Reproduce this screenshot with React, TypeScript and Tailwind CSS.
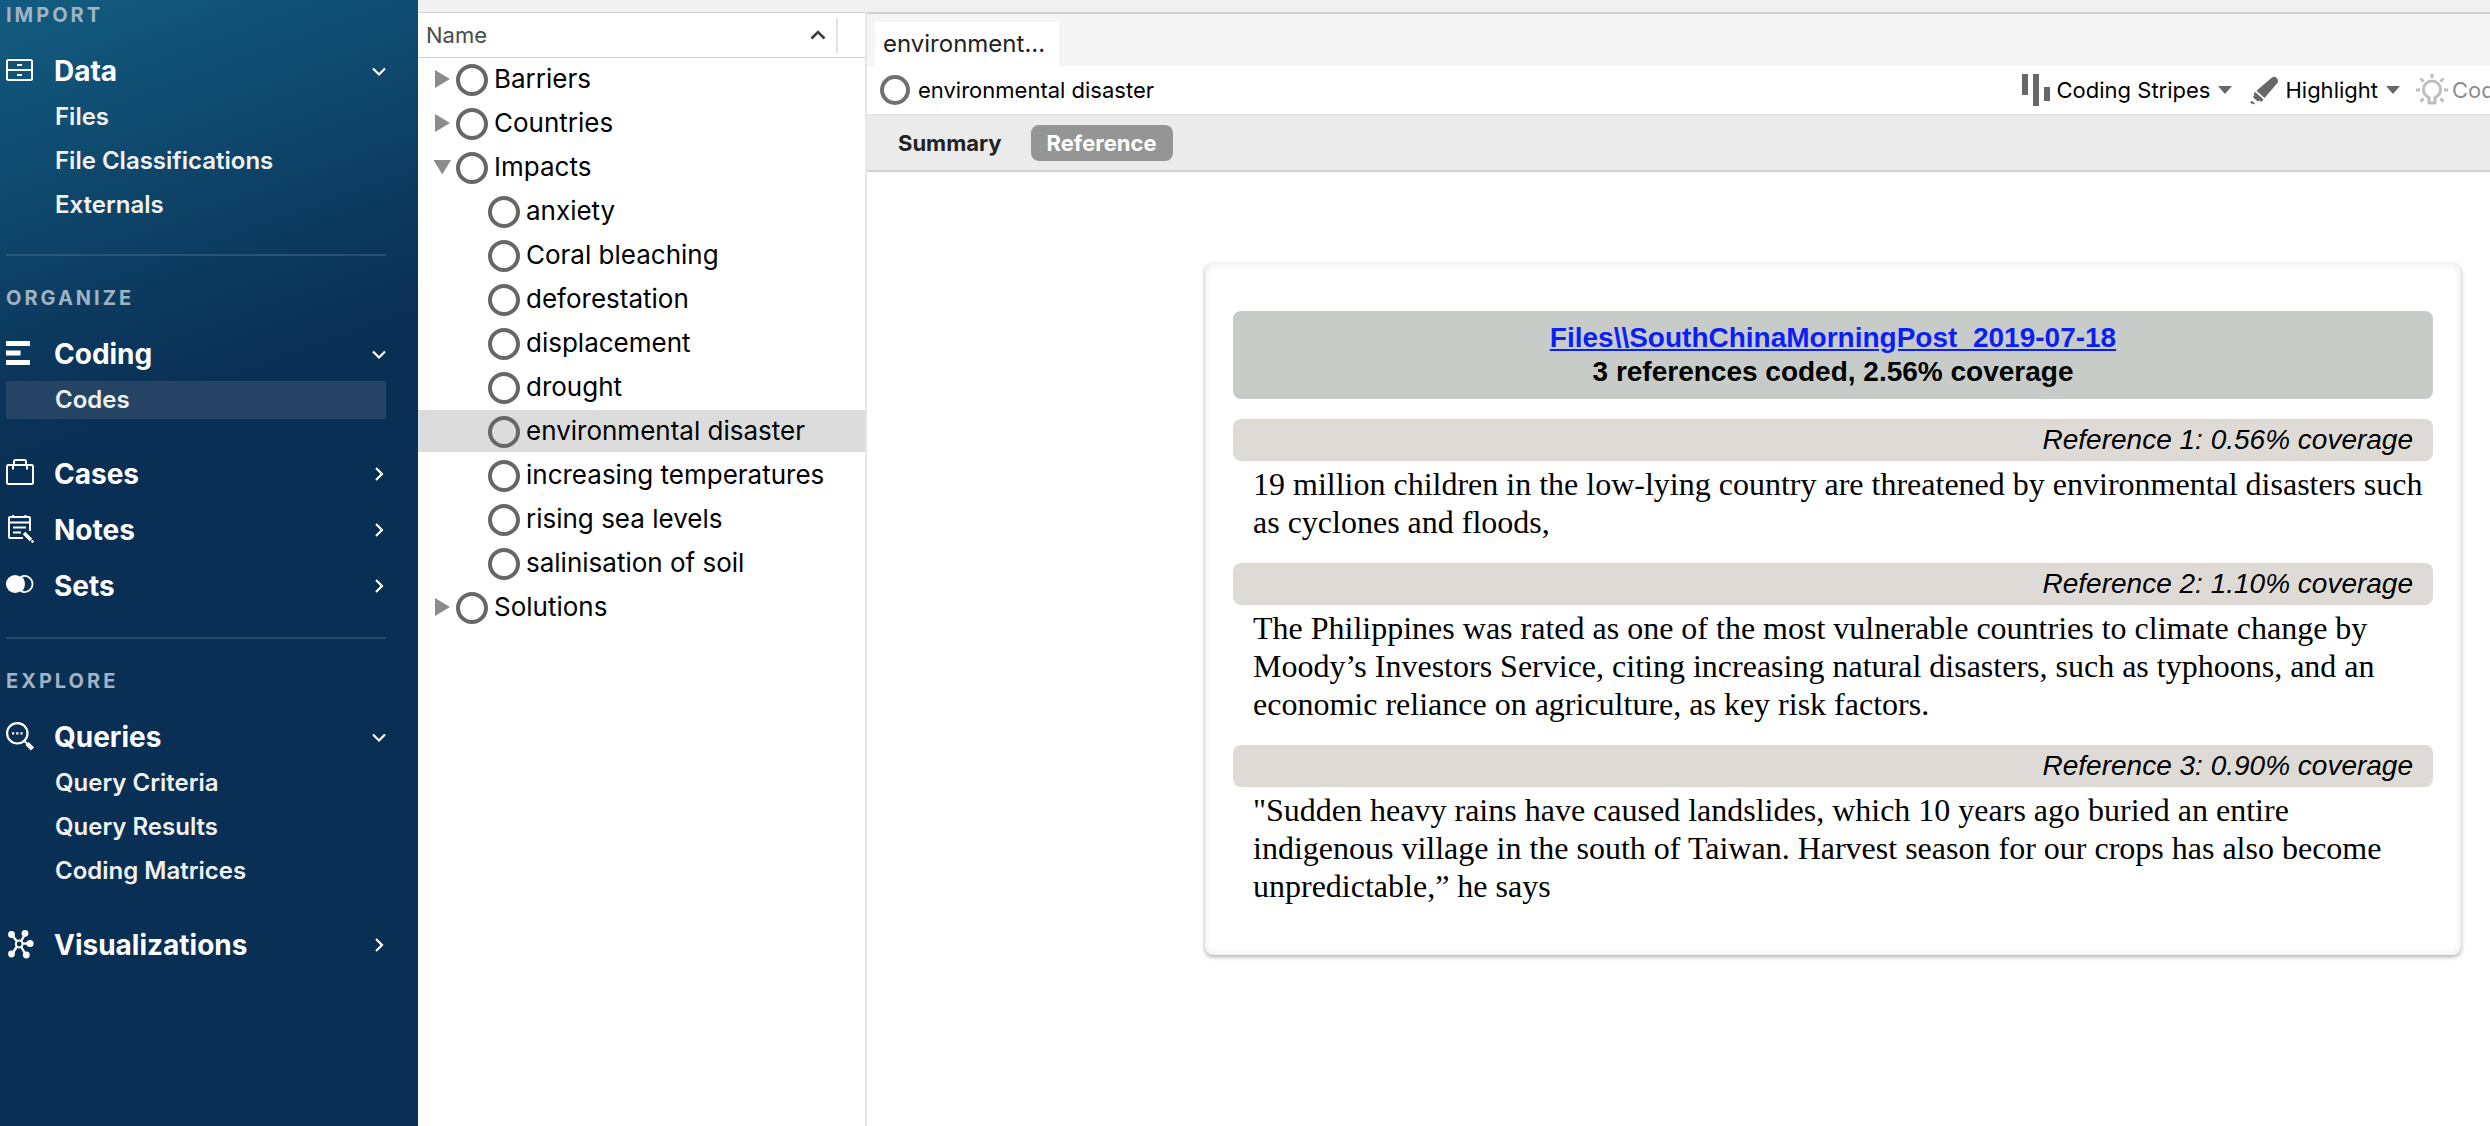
import { useState, type ReactNode } from "react";

type Group = { name: string; icon: ReactNode; children?: string[] };
type Section = { title: string; groups: Group[] };

const sections: Section[] = [
  { title: "IMPORT", groups: [{ name: "Data", icon: <DataIcon />, children: ["Files", "File Classifications", "Externals"] }] },
  {
    title: "ORGANIZE",
    groups: [
      { name: "Coding", icon: <CodingIcon />, children: ["Codes"] },
      { name: "Cases", icon: <CasesIcon /> },
      { name: "Notes", icon: <NotesIcon /> },
      { name: "Sets", icon: <SetsIcon /> },
    ],
  },
  {
    title: "EXPLORE",
    groups: [
      { name: "Queries", icon: <QueriesIcon />, children: ["Query Criteria", "Query Results", "Coding Matrices"] },
      { name: "Visualizations", icon: <VisualizationsIcon /> },
    ],
  },
];

type Code = { name: string; children?: string[] };

const codes: Code[] = [
  { name: "Barriers" },
  { name: "Countries" },
  {
    name: "Impacts",
    children: [
      "anxiety",
      "Coral bleaching",
      "deforestation",
      "displacement",
      "drought",
      "environmental disaster",
      "increasing temperatures",
      "rising sea levels",
      "salinisation of soil",
    ],
  },
  { name: "Solutions" },
];

const references = [
  {
    title: "Reference 1: 0.56% coverage",
    text: "19 million children in the low-lying country are threatened by environmental disasters such as cyclones and floods,",
  },
  {
    title: "Reference 2: 1.10% coverage",
    text: "The Philippines was rated as one of the most vulnerable countries to climate change by Moody’s Investors Service, citing increasing natural disasters, such as typhoons, and an economic reliance on agriculture, as key risk factors.",
  },
  {
    title: "Reference 3: 0.90% coverage",
    text: '"Sudden heavy rains have caused landslides, which 10 years ago buried an entire indigenous village in the south of Taiwan. Harvest season for our crops has also become unpredictable,” he says',
  },
];

function Icon({ children }: { children: ReactNode }) {
  return (
    <svg className="h-7 w-7 overflow-visible" viewBox="0 0 28 28" fill="none" stroke="white" strokeWidth="2" aria-hidden="true">
      {children}
    </svg>
  );
}

function DataIcon() {
  return (
    <Icon>
      <rect x="1" y="3" width="25" height="20" rx="1.5" />
      <path d="M1 13H26M11 8h5M11 18h5" />
    </Icon>
  );
}

function CodingIcon() {
  return (
    <Icon>
      <path d="M0 3.5H24M0 13H14.5M0 22.5H24" strokeWidth="4.8" />
    </Icon>
  );
}

function CasesIcon() {
  return (
    <Icon>
      <rect x="1" y="5" width="26" height="19" rx="1.5" />
      <path d="M7 9.5V5.5M21 9.5V5.5M8 5V1.5Q8 0 9.5 0H18.5Q20 0 20 1.5V5" />
    </Icon>
  );
}

function NotesIcon() {
  return (
    <Icon>
      <path d="M17 22H4Q3 22 3 21V2Q3 1 4 1H23Q24 1 24 2V15M3 6.5H24M7 -1V2M19.5 -1V2M7 11.5H20M7 16.5H15" />
      <path d="M18 17L25 24" strokeWidth="3.6" />
      <circle cx="26.5" cy="25.5" r="1" fill="white" strokeWidth="1" />
    </Icon>
  );
}

function SetsIcon() {
  return (
    <Icon>
      <circle cx="9" cy="12" r="9" fill="white" stroke="none" />
      <path d="M15 4.8A8 8 0 1 1 15 19.2Q18 16.5 18 12T15 4.8Z" strokeWidth="1.8" />
    </Icon>
  );
}

function QueriesIcon() {
  return (
    <Icon>
      <circle cx="11.3" cy="10.3" r="10.2" strokeWidth="2.2" />
      <path d="M18.5 18L21 20.5" />
      <path d="M21 20.5L26.5 26" strokeWidth="4.4" />
      <path d="M6 10.3h2.2M10.2 10.3h2.2M14.400 10.3h2.2" strokeWidth="2.2" />
    </Icon>
  );
}

function VisualizationsIcon() {
  return (
    <Icon>
      <path d="M6 4L11 10.5M19 3L15 10.5M23 12.5H16.5M6 23L11 15.5M20 24L15 15.5" strokeWidth="2.4" />
      <circle cx="13.2" cy="13" r="3.4" />
      <g fill="white" stroke="none">
        <circle cx="5.5" cy="3.5" r="3.4" />
        <circle cx="19" cy="2.3" r="3.4" />
        <circle cx="24" cy="12.5" r="3.6" />
        <circle cx="5.5" cy="23" r="3.4" />
        <circle cx="20.3" cy="24" r="3.4" />
      </g>
    </Icon>
  );
}

function Chevron({ open }: { open: boolean }) {
  return (
    <svg className="h-3.5 w-3.5" viewBox="0 0 14 14" fill="none" stroke="white" strokeWidth="2.2" aria-hidden="true">
      <path d={open ? "M1 4.5L7 10.5L13 4.5" : "M4 1L10 7L4 13"} />
    </svg>
  );
}

function Sidebar() {
  return (
    <nav
      aria-label="Project"
      className="w-[418px] shrink-0 bg-[linear-gradient(160deg,#135c81_0px,#0a2f54_430px)] pt-[3px] pr-8 pl-1.5 font-['Inter',sans-serif]"
    >
      {sections.map((section, i) => (
        <section key={section.title}>
          {i > 0 && <hr className="mt-[27px] mb-[30px] border-t-2 border-white/12" />}
          <h2 className="h-6 text-[20px] leading-6 font-bold tracking-[3px] text-[#9fb3c3]">{section.title}</h2>
          <div className="mt-5 flex flex-col gap-2">
            {section.groups.map((group, g) => (
              <div key={group.name} className={group.children && g < section.groups.length - 1 ? "pb-5" : ""}>
                <button className="flex h-12 w-full items-center text-left">
                  {group.icon}
                  <span className="ml-5 grow text-[28px] leading-8 font-bold text-white">{group.name}</span>
                  <Chevron open={!!group.children} />
                </button>
                {group.children && (
                  <ul>
                    {group.children.map((child) => (
                      <li key={child} className="py-[3px]">
                        <button
                          className={`block h-[38px] w-full rounded-xs pl-[49px] text-left text-[24px] leading-8 font-semibold text-[#f2f2f2] ${
                            child === "Codes" ? "bg-[#264565]" : ""
                          }`}
                        >
                          {child}
                        </button>
                      </li>
                    ))}
                  </ul>
                )}
              </div>
            ))}
          </div>
        </section>
      ))}
    </nav>
  );
}

function Ring() {
  return <span className="mt-0.5 block h-8 w-8 shrink-0 rounded-full border-4 border-[#676767]" />;
}

function Disclosure({ open }: { open: boolean }) {
  return (
    <svg className="h-5 w-5 shrink-0" viewBox="0 0 20 20" fill="#8c8c8c" aria-hidden="true">
      <path d={open ? "M1.5 3H19L10.2 17.5Z" : "M3 1V19L18 10Z"} />
    </svg>
  );
}

function CodeTree() {
  const [selected, setSelected] = useState("environmental disaster");
  const row = "mb-0.5 flex h-[42px] w-full items-center text-left text-[26px] leading-8 text-black";
  return (
    <section aria-label="Codes" className="w-[449px] shrink-0 border-r-2 border-[#e6e6e6] bg-white font-['Inter',sans-serif]">
      <div className="flex h-[46px] items-center border-y border-[#d2d2d2] pl-2">
        <button className="flex grow items-center justify-between text-[22px] leading-8 text-[#4a4a4a]">
          Name
          <svg className="h-4 w-4" viewBox="0 0 16 16" fill="none" stroke="#3c3c3c" strokeWidth="2.6" aria-hidden="true">
            <path d="M1.5 11.5L8 5L14.5 11.5" />
          </svg>
        </button>
        <span className="mr-[27px] ml-2.5 h-[35px] w-0.5 bg-[#e2e2e2]" />
      </div>
      <ul>
        {codes.map((code) => (
          <li key={code.name}>
            <button className={`${row} pl-3.5`} onClick={() => setSelected(code.name)}>
              <Disclosure open={!!code.children} />
              <span className="w-1" />
              <Ring />
              <span className="ml-1.5">{code.name}</span>
            </button>
            {code.children && (
              <ul>
                {code.children.map((child) => (
                  <li key={child}>
                    <button className={`${row} pl-[70px] ${child === selected ? "bg-[#dcdcdc]" : ""}`} onClick={() => setSelected(child)}>
                      <Ring />
                      <span className="ml-1.5">{child}</span>
                    </button>
                  </li>
                ))}
              </ul>
            )}
          </li>
        ))}
      </ul>
    </section>
  );
}

function Caret() {
  return (
    <svg className="h-2 w-3.5" viewBox="0 0 14 8" fill="#676767" aria-hidden="true">
      <path d="M0 0H14L7 8Z" />
    </svg>
  );
}

function DetailHeader() {
  return (
    <div className="flex h-[50px] items-center border-b-2 border-[#e4e4e4] bg-white pl-[13px] text-[22px] leading-8 text-black">
      <span className="block h-[30px] w-[30px] rounded-full border-4 border-[#707070]" />
      <h1 className="ml-2 grow">environmental disaster</h1>
      <button className="flex items-center">
        <svg className="h-8 w-[29px]" viewBox="0 0 29 32" fill="#676767" aria-hidden="true">
          <path d="M0 0H6V21H0ZM11 0H17V32H11ZM22 13H28V27H22Z" />
        </svg>
        <span className="ml-1.5">Coding Stripes</span>
        <span className="ml-2">
          <Caret />
        </span>
      </button>
      <button className="ml-[18px] flex items-center">
        <svg className="h-[29px] w-[29px]" viewBox="0 0 29 29" fill="#676767" aria-hidden="true">
          <path d="M22 1.5Q24.5 -.3 26.5 1.7T27.8 6.5L14.5 22L6.5 14.8Z" />
          <path d="M5.3 16L13.3 23.2L11.5 26L9.3 24.6L7.8 25.4L3 21.2L4.3 19.2L3.6 17.8Z" />
          <path d="M1.8 24.8L5 27.2L3.6 28.6L2.6 27.4L1.2 27.8L.3 26.2Z" />
        </svg>
        <span className="ml-1.5">Highlight</span>
        <span className="ml-2">
          <Caret />
        </span>
      </button>
      <button disabled className="ml-4 flex w-[74px] items-center overflow-hidden whitespace-nowrap text-[#8e8e8e]">
        <svg className="h-8 w-8 shrink-0" viewBox="0 0 32 32" fill="none" stroke="#bdbdbd" strokeWidth="3" aria-hidden="true">
          <path d="M13 23.5Q7.5 21 7.5 15.5A8.5 8.5 0 0 1 24.5 15.5Q24.5 21 19 23.5V29H13Z" strokeLinejoin="round" />
          <path d="M16 0V4M0 16H4M28 16H32M4.5 4.5L7.5 7.5M27.5 4.5L24.5 7.5M4.5 27.5L7.5 24.5M27.5 27.5L24.5 24.5" />
        </svg>
        <span className="ml-1">Code</span>
      </button>
    </div>
  );
}

function ReferenceCard() {
  return (
    <article className="mt-[91px] mr-[29px] ml-auto w-[1256px] max-w-full rounded-lg bg-white px-7 pt-12 pb-[50px] shadow-[0_2px_4px_rgba(0,0,0,0.32),inset_0_0_8px_rgba(0,0,0,0.10)]">
      <header className="rounded-lg bg-[#c8ccc8] py-2.5 text-center font-['Liberation_Sans',Arial,sans-serif] text-[28px] leading-[34px] font-bold text-black">
        <a href="#source" className="block text-[#0b1ff5] underline">
          Files\\SouthChinaMorningPost_2019-07-18
        </a>
        <p>3 references coded, 2.56% coverage</p>
      </header>
      <div className="mt-5 flex flex-col gap-[22px]">
        {references.map((reference) => (
          <section key={reference.title}>
            <h2 className="rounded-lg bg-[#dedbd6] pr-5 text-right font-['Liberation_Sans',Arial,sans-serif] text-[28px] leading-[42px] text-black italic">
              {reference.title}
            </h2>
            <p className="mt-1 pr-2 pl-5 font-['Liberation_Serif','Times_New_Roman',serif] text-[32px] leading-[38px] text-black">
              {reference.text}
            </p>
          </section>
        ))}
      </div>
    </article>
  );
}

function Detail() {
  return (
    <main className="min-w-0 grow border-t-2 border-[#d2d2d2] bg-white font-['Inter',sans-serif]">
      <div role="tablist" className="flex bg-[#f5f5f5] pt-2 pl-2">
        <button role="tab" aria-selected="true" className="h-11 w-[184px] bg-white pl-2 text-left text-[24px] leading-8 text-[#222222]">
          environment...
        </button>
      </div>
      <DetailHeader />
      <div className="flex h-14 items-center border-b-2 border-[#d2d2d2] bg-[#ebebeb] pl-4 text-[22px] leading-9 font-bold">
        <button className="px-[15px] text-[#222222]">Summary</button>
        <button aria-pressed="true" className="ml-3.5 rounded-lg bg-[#959595] px-4 text-white">
          Reference
        </button>
      </div>
      <ReferenceCard />
    </main>
  );
}

export default function App() {
  return (
    <div className="flex min-h-screen bg-white">
      <Sidebar />
      <div className="flex min-w-0 grow flex-col">
        <div className="h-3 bg-[#f1f1f1]" />
        <div className="flex grow">
          <CodeTree />
          <Detail />
        </div>
      </div>
    </div>
  );
}
